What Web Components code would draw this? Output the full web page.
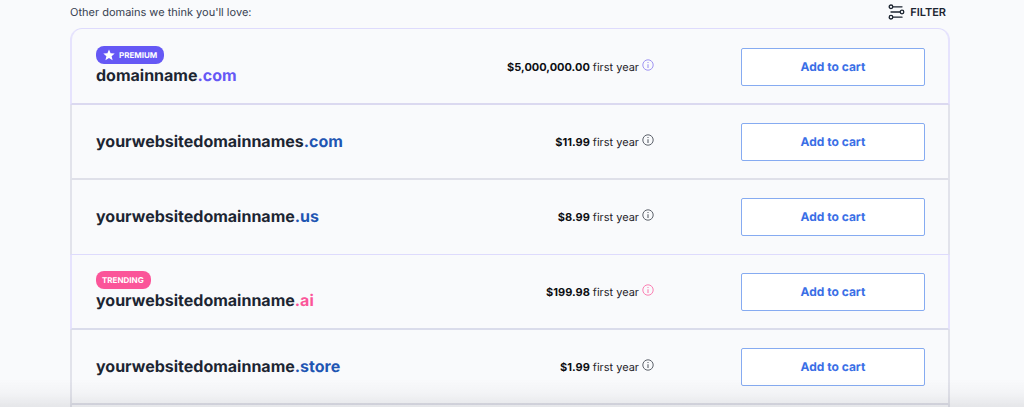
<!DOCTYPE html>
<html lang="en">
<head>
<meta charset="utf-8">
<meta name="viewport" content="width=device-width, initial-scale=1">
<title>Domains</title>
<style>
html, body {
    height: 100%;
}
body {
    margin: 0;
    overflow: hidden;
    background: #f9fafc;
    color: #1f2937;
    font-family: Inter, "Liberation Sans", sans-serif;
    text-rendering: geometricPrecision;
}
</style>
</head>
<body>
<domain-results>
    <span slot="title">Other domains we think you'll love:</span>
    <filter-button slot="action">FILTER</filter-button>
    <domain-row name="domainname" tld=".com" price="$5,000,000.00" kind="premium"></domain-row>
    <domain-row name="yourwebsitedomainnames" tld=".com" price="$11.99"></domain-row>
    <domain-row name="yourwebsitedomainname" tld=".us" price="$8.99" next="trending"></domain-row>
    <domain-row name="yourwebsitedomainname" tld=".ai" price="$199.98" kind="trending"></domain-row>
    <domain-row name="yourwebsitedomainname" tld=".store" price="$1.99"></domain-row>
</domain-results>

<template id="results">
<style>
:host {
    display: flex;
    flex-direction: column;
    box-sizing: border-box;
    min-height: 100vh;
    padding: 0 74px 0 70px;
}
header {
    display: flex;
    justify-content: space-between;
    align-items: center;
    height: 24px;
    padding-right: 4px;
    margin-bottom: 4px;
    font-size: 11px;
    line-height: 24px;
    color: #374151;
}
.list {
    flex: 1;
    box-sizing: border-box;
}
.more {
    height: 8px;
    border: solid #e2e3eb;
    border-width: 0 2px;
}
/* shadow over the bottom edge of the window */
.fade {
    position: fixed;
    left: 0;
    right: 0;
    bottom: 0;
    height: 28px;
    background: linear-gradient(to bottom, rgba(60, 60, 70, 0), rgba(60, 60, 70, .03) 50%, rgba(60, 60, 70, .1));
    pointer-events: none;
}
</style>
<header><slot name="title"></slot><slot name="action"></slot></header>
<div class="list"><slot></slot><div class="more"></div></div>
<div class="fade"></div>
</template>

<template id="filter">
<style>
:host {
    display: block;
}
button {
    display: flex;
    align-items: center;
    gap: 5px;
    padding: 0;
    border: 0;
    background: none;
    color: #1c2430;
    font: 600 11px/24px Inter, "Liberation Sans", sans-serif;
    text-rendering: inherit;
    cursor: pointer;
}
svg {
    display: block;
}
</style>
<button type="button">
    <svg width="17" height="16" viewBox="0 0 17 16" fill="none" stroke="#1c2430" stroke-width="1.3" stroke-linecap="round" aria-hidden="true">
        <circle cx="3" cy="2.8" r="1.8"/><path d="M4.8 2.8H14"/>
        <circle cx="14" cy="8" r="1.8"/><path d="M3 8h9.2"/>
        <circle cx="3" cy="13.2" r="1.8"/><path d="M4.8 13.2H14"/>
    </svg>
    <slot></slot>
</button>
</template>

<template id="row">
<style>
:host {
    --edge: #e2e3eb;
    --line: #dfe0e9;
    --tld: #1f56b3;
    --info: #5d626b;
    display: grid;
    grid-template-columns: 1fr auto 184px;
    align-items: center;
    column-gap: 87px;
    box-sizing: border-box;
    height: 75px;
    padding: 0 23px 0 24px;
    border: solid var(--edge);
    border-width: 0 2px;
    border-bottom: 2px solid var(--line);
}
:host([next="trending"]) {
    border-bottom: 1px solid #dedbfd;
}
:host([kind="premium"]) {
    --edge: #e6e3fd;
    --line: #dbd9f0;
    --tld: #6558f5;
    --info: #9f94f2;
    height: 77px;
    padding-top: 1px;
    border-top: 1px solid #dedbfd;
    border-radius: 12px 12px 0 0;
}
:host([kind="trending"]) {
    --edge: #e6e3fd;
    --line: #dadceb;
    --tld: #fb5599;
    --info: #fb80b3;
}
.domain {
    padding-bottom: 2px;
}
.badge {
    display: flex;
    align-items: center;
    gap: 4px;
    width: max-content;
    height: 18px;
    padding: 0 7px 0 6px;
    border-radius: 8px;
    background: var(--tld);
    color: #fff;
    font-size: 8px;
    font-weight: 700;
    line-height: 18px;
}
.name {
    font-size: 16px;
    font-weight: 700;
    line-height: 22px;
    color: #1c2532;
}
.tld {
    color: var(--tld);
}
.price {
    display: flex;
    align-items: center;
    gap: 3px;
    font-size: 11px;
    line-height: 16px;
    color: #1f2329;
}
b {
    font-weight: 700;
    color: #0c0e12;
}
svg {
    display: block;
}
.info {
    align-self: flex-start;
    color: var(--info);
}
button {
    height: 38px;
    padding: 0;
    border: 1px solid #86abf1;
    border-radius: 2px;
    background: #fff;
    color: #3a6fe6;
    font: 700 12px/16px Inter, "Liberation Sans", sans-serif;
    text-rendering: inherit;
    cursor: pointer;
}
</style>
<div class="domain">
    <div class="badge"></div>
    <div class="name"><span class="sld"></span><span class="tld"></span></div>
</div>
<div class="price"><b></b><span>first year</span><svg class="info" width="12" height="12" viewBox="0 0 12 12" fill="none" stroke="currentColor" aria-hidden="true"><circle cx="6" cy="6" r="5.2" stroke-width="1"/><path d="M6 5.2V9M6 3v1.1" stroke-width="1.1"/></svg></div>
<button type="button">Add to cart</button>
</template>

<script>
const star = '<svg width="13" height="12" viewBox="-1 0 13 12" fill="#fff" aria-hidden="true"><path d="M6 .4l1.6 3.8 4.1.3-3.1 2.7 1 4L6 9l-3.6 2.2 1-4L.3 4.5l4.1-.3z"/></svg>';

class DomainResults extends HTMLElement {
    constructor() {
        super();
        this.attachShadow({mode: 'open'});
        this.shadowRoot.appendChild(document.getElementById('results').content.cloneNode(true));
    }
}

class FilterButton extends HTMLElement {
    constructor() {
        super();
        this.attachShadow({mode: 'open'});
        this.shadowRoot.appendChild(document.getElementById('filter').content.cloneNode(true));
    }
}

class DomainRow extends HTMLElement {
    constructor() {
        super();
        this.attachShadow({mode: 'open'});
        this.shadowRoot.appendChild(document.getElementById('row').content.cloneNode(true));
    }

    connectedCallback() {
        const root = this.shadowRoot;
        const kind = this.getAttribute('kind');
        const badge = root.querySelector('.badge');
        root.querySelector('.sld').textContent = this.getAttribute('name');
        root.querySelector('.tld').textContent = this.getAttribute('tld');
        root.querySelector('b').textContent = this.getAttribute('price');

        if (kind) {
            badge.innerHTML = (kind == 'premium' ? star : '') + '<span>' + kind.toUpperCase() + '</span>';
        }
        else badge.remove();
    }
}

customElements.define('domain-results', DomainResults);
customElements.define('filter-button', FilterButton);
customElements.define('domain-row', DomainRow);
</script>
</body>
</html>
